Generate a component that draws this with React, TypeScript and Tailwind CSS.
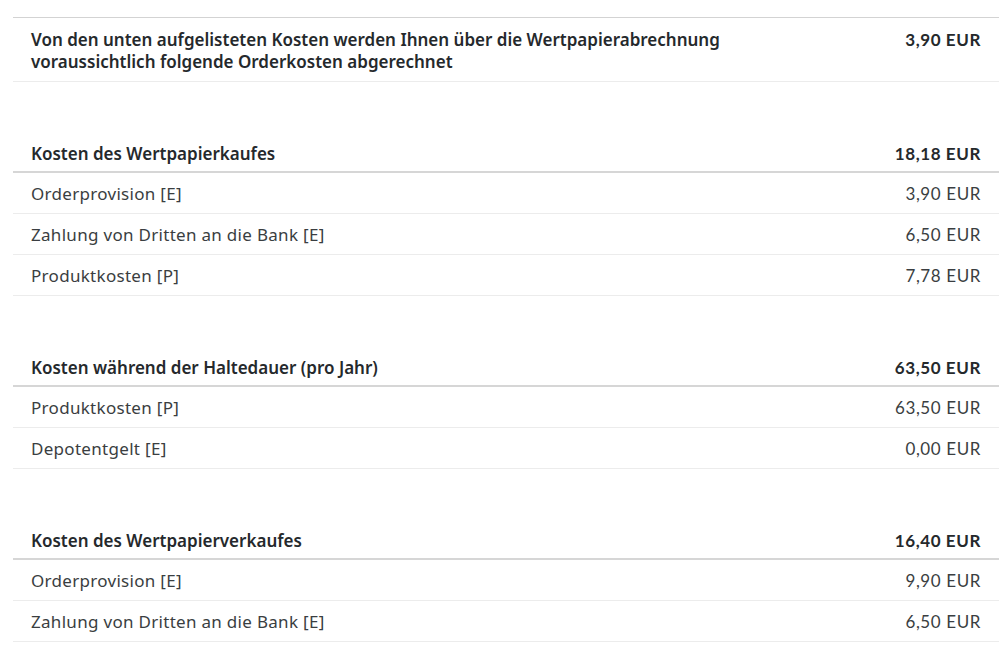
const sections = [
  {
    title: "Kosten des Wertpapierkaufes",
    total: "18,18 EUR",
    rows: [
      ["Orderprovision [E]", "3,90 EUR"],
      ["Zahlung von Dritten an die Bank [E]", "6,50 EUR"],
      ["Produktkosten [P]", "7,78 EUR"],
    ],
  },
  {
    title: "Kosten während der Haltedauer (pro Jahr)",
    total: "63,50 EUR",
    rows: [
      ["Produktkosten [P]", "63,50 EUR"],
      ["Depotentgelt [E]", "0,00 EUR"],
    ],
  },
  {
    title: "Kosten des Wertpapierverkaufes",
    total: "16,40 EUR",
    rows: [
      ["Orderprovision [E]", "9,90 EUR"],
      ["Zahlung von Dritten an die Bank [E]", "6,50 EUR"],
    ],
  },
];

const label = "font-['Noto_Sans',sans-serif] text-[17px]";
const amount = "font-['Lato',sans-serif] text-[17px] tracking-[0.6px]";

export default function App() {
  return (
    <main className="min-h-screen bg-white pt-[17px] pl-[13px] text-[#2f3336]">
      {/* Summary */}
      <div className="flex justify-between border-t border-b border-t-[#d3d3d3] border-b-[#ececec] pt-[11px] pb-[8px] pl-[18px] pr-[18px]">
        <p className={`${label} max-w-[690px] font-semibold leading-[22px] text-[#25292c]`}>
          Von den unten aufgelisteten Kosten werden Ihnen über die Wertpapierabrechnung voraussichtlich folgende
          Orderkosten abgerechnet
        </p>
        <p className={`${amount} font-bold leading-[22px] text-[#25292c]`}>3,90 EUR</p>
      </div>

      {sections.map((s) => (
        <section key={s.title} className="mt-[54px]">
          <div className="flex h-[37px] items-center justify-between border-b-2 border-[#d6d6d6] px-[18px] text-[#25292c]">
            <span className={`${label} font-semibold`}>{s.title}</span>
            <span className={`${amount} font-bold`}>{s.total}</span>
          </div>
          {s.rows.map(([name, value]) => (
            <div
              key={name}
              className="flex h-[41px] items-center justify-between border-b border-[#ececec] px-[18px] pt-[1px] text-[#3a3e41]"
            >
              <span className={`${label} tracking-[0.3px]`}>{name}</span>
              <span className={amount}>{value}</span>
            </div>
          ))}
        </section>
      ))}
    </main>
  );
}
